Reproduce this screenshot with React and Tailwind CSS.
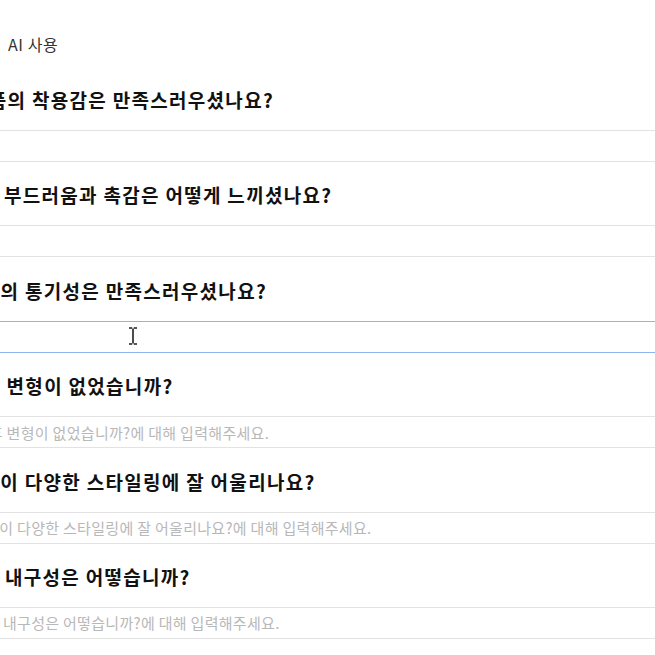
import { useState } from "react";

const questions = [
  { id: 1, text: "제품의 착용감은 만족스러우셨나요?", indent: "pl-[34px]" },
  { id: 2, text: "원단의 부드러움과 촉감은 어떻게 느끼셨나요?", indent: "pl-[6px]" },
  { id: 3, text: "소재의 통기성은 만족스러우셨나요?", indent: "pl-[27px]" },
  { id: 4, text: "세탁 후 변형이 없었습니까?", indent: "pl-[3px]" },
  { id: 5, text: "디자인이 다양한 스타일링에 잘 어울리나요?", indent: "pl-[8px]" },
  { id: 6, text: "제품의 내구성은 어떻습니까?", indent: "pl-[7px]" },
];

// only the last three show their placeholder in the capture
const showPlaceholder = [4, 5, 6];

function IBeam() {
  return (
    <svg width="10" height="18" viewBox="0 0 10 18" className="absolute left-[192px] top-[6px] pointer-events-none">
      <path d="M1 1h3.2M5.8 1H9M1 17h3.2M5.8 17H9" stroke="#1f1f1f" strokeWidth="1.4" />
      <path d="M5 1.5v15" stroke="#1f1f1f" strokeWidth="1.6" />
    </svg>
  );
}

export default function App() {
  const [answers, setAnswers] = useState({});

  return (
    <div className="w-full h-[655px] overflow-hidden bg-white font-['Noto_Sans_CJK_KR','Noto_Sans',sans-serif]">
      <div className="-ml-[64px] w-[780px] pt-[34px]">
        {/* AI toggle label, checkbox is cut off on the left */}
        <div className="pl-[72px] h-5 leading-5 text-[16px] tracking-[0.6px] text-[#333]">AI 사용</div>

        <div className="mt-8 flex flex-col gap-[19.4px]">
          {questions.map((q) => (
            <div key={q.id}>
              <label
                htmlFor={`q${q.id}`}
                className={`block h-7 leading-7 text-[19px] tracking-[1.3px] font-bold text-[#111] whitespace-nowrap ${q.indent}`}
              >
                {q.text}
              </label>
              <div className="relative mt-4">
                <input
                  id={`q${q.id}`}
                  type="text"
                  value={answers[q.id] || ""}
                  onChange={(e) => setAnswers({ ...answers, [q.id]: e.target.value })}
                  placeholder={showPlaceholder.includes(q.id) ? `${q.text}에 대해 입력해주세요.` : ""}
                  className={`block w-full h-8 pl-5 pr-3 border bg-white text-[15px] tracking-[0.3px] outline-none placeholder:text-[#b8b8b8] ${
                    q.id === 3 ? "border-[#90b4f0]" : "border-[#e2e2e2]"
                  }`}
                />
                {q.id === 3 && <IBeam />}
              </div>
            </div>
          ))}
        </div>
      </div>
    </div>
  );
}
